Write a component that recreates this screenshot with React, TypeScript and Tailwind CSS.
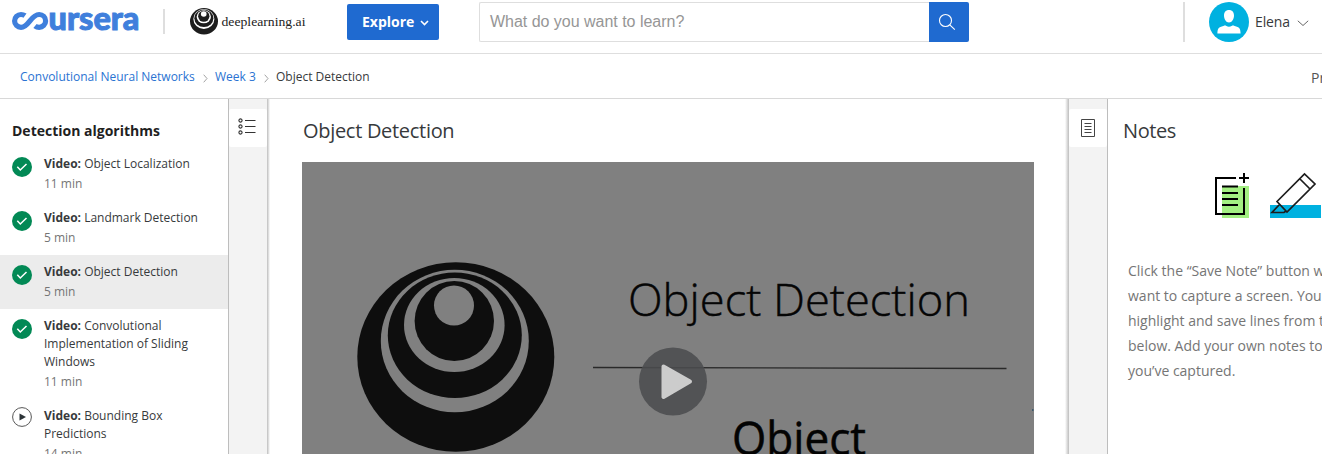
import React from "react";

const lessons = [
  { title: "Object Localization", time: "11 min", done: true, active: false },
  { title: "Landmark Detection", time: "5 min", done: true, active: false },
  { title: "Object Detection", time: "5 min", done: true, active: true },
  { title: "Convolutional Implementation of Sliding Windows", time: "11 min", done: true, active: false },
  { title: "Bounding Box Predictions", time: "14 min", done: false, active: false },
];

function CourseraLogo() {
  return (
    <svg width="130" height="22" viewBox="0 0 130 22" className="shrink-0 overflow-visible">
      <path d="M14 5.700C12.900 4.900 11.600 4.500 10 4.500a6.400 6.400 0 0 0 0 12.800C18 17.300 19.600 4.500 28.200 4.500a6.400 6.400 0 1 1 0 12.800c-1.700 0-3.100-.5-4.200-1.400" fill="none" stroke="#3f7fdc" strokeWidth="5.200" />
      <text x="37.500" y="19.500" textLength="91" lengthAdjust="spacingAndGlyphs" fill="#3f7fdc" stroke="#3f7fdc" strokeWidth="1" fontSize="32.500" className="font-[Lato] font-black">ursera</text>
    </svg>
  );
}

function Rings({ bg, ink }: { bg: string; ink: string }) {
  return (
    <>
      <ellipse cx="98.5" cy="95" rx="98.5" ry="94.7" fill={ink} />
      <ellipse cx="97.5" cy="79" rx="74" ry="71.3" fill={bg} />
      <ellipse cx="97.5" cy="73.300" rx="67" ry="62.700" fill={ink} />
      <ellipse cx="97" cy="63" rx="50.3" ry="47" fill={bg} />
      <ellipse cx="97" cy="59" rx="39.7" ry="40" fill={ink} />
      <circle cx="96.7" cy="43.5" r="20" fill={bg} />
    </>
  );
}

function Header() {
  return (
    <header className="flex h-[54px] shrink-0 border-b border-[#dedede]">
      <div className="mt-[10px] ml-[11px] h-[22px] w-[130px]"><CourseraLogo /></div>
      <div className="mt-[9px] ml-[22px] h-[25px] w-0.5 bg-[#dedede]" />
      <svg viewBox="0 0 197 190" preserveAspectRatio="none" className="mt-[8px] ml-[25px] h-[26.5px] w-[28px]">
        <Rings bg="#fff" ink="#1d1d1d" />
      </svg>
      <svg width="88" height="24" className="mt-[10px] ml-[2px]">
        <text x="1.500" y="16" textLength="84" lengthAdjust="spacingAndGlyphs" fontSize="12.500" fill="#222" className="font-['Liberation_Serif']">deeplearning.ai</text>
      </svg>
      <button className="mt-[4px] ml-[39px] flex h-[36px] w-[92px] items-center rounded-[2px] bg-[#1f6ad0] pb-[1px] pl-[15px] text-[14px] font-bold text-white">
        <span>Explore</span>
        <svg width="9" height="6" viewBox="0 0 9 6" className="mt-[2px] ml-[6px]"><path d="M1 1l3.5 3.5L8 1" fill="none" stroke="#fff" strokeWidth="1.6" /></svg>
      </button>
      <div className="mt-[2px] ml-[40px] flex h-[40px] w-[490px]">
        <div className="flex w-[450px] items-center rounded-l-[2px] border border-r-0 border-[#dedede] pb-[1px] pl-[10px] font-['Liberation_Sans'] text-[16px] text-[#969696]"><span className="tracking-[-0.02px]">What do you want to learn?</span></div>
        <div className="flex w-[40px] items-center justify-center rounded-r-[2px] bg-[#1f6ad0]">
          <svg width="18" height="18" viewBox="0 0 18 18" className="-ml-[5px]" fill="none" stroke="#fff" strokeWidth="1.1"><circle cx="7.5" cy="7.5" r="6" /><path d="M11.8 11.8l5 4.8" /></svg>
        </div>
      </div>
      <div className="mt-[2px] ml-[214px] h-[40px] w-0.5 bg-[#dedede]" />
      <svg width="40" height="40" viewBox="0 0 40 40" className="mt-[2px] ml-[24px] shrink-0">
        <circle cx="20" cy="20" r="20" fill="#00b1e0" />
        <path d="M20 8c3.2 0 5 2.2 5 5.4 0 3.4-2 7-5 7s-5-3.600-5-7C15 10.200 16.800 8 20 8ZM8.400 31.500c0-5 1.200-6.500 6-7.600 1.600-.4 2-.4 3 .2 1.600.9 3.600.9 5.200 0 1-.6 1.400-.6 3-.2 4.800 1.100 6 2.600 6 7.600Z" fill="#fff" />
      </svg>
      <div className="mt-[12px] ml-[6px] text-[14px] leading-5 tracking-[-0.1px] text-[#373a3c]">Elena</div>
      <svg width="12" height="7" viewBox="0 0 12 7" className="mt-[20px] ml-[7px]"><path d="M.8.8L6 5.500l5.200-4.700" fill="none" stroke="#666" strokeWidth="1" /></svg>
    </header>
  );
}

function Chevron() {
  return <svg width="5" height="9" viewBox="0 0 5 9" className="mt-[2px]"><path d="M.7.700l3.300 3.800-3.300 3.800" fill="none" stroke="#999" strokeWidth=".9" /></svg>;
}

function Breadcrumbs() {
  return (
    <nav className="flex h-[45px] shrink-0 items-center border-b border-[#d8d8d8] pt-[2px] pl-[20px] text-[12px]">
      <span className="w-[175px] whitespace-nowrap text-[#2a73d2]">Convolutional Neural Networks</span>
      <span className="w-[8px]" /><Chevron />
      <span className="ml-[7px] w-[41px] whitespace-nowrap text-[#2a73d2]">Week 3</span>
      <span className="w-[8px]" /><Chevron />
      <span className="ml-[7px] w-[94px] whitespace-nowrap text-[#373a3c]">Object Detection</span>
      <span className="ml-auto w-[11px] overflow-hidden whitespace-nowrap text-[14px] text-[#555]">Prev</span>
    </nav>
  );
}

function Sidebar() {
  return (
    <aside className="w-[229px] shrink-0 border-r border-[#bdbdbd]">
      <h3 className="mt-[22px] mb-[6px] pl-[12px] text-[14px] leading-5 font-bold text-[#1f1f1f]">Detection algorithms</h3>
      {lessons.map((l) => (
        <div key={l.title} className={l.active ? "flex bg-[#ececec] pt-[8px] pb-[6px] pl-[12px]" : "flex pt-[8px] pb-[6px] pl-[12px]"}>
          <svg width="20" height="20" viewBox="0 0 20 20" className={l.done ? "mt-[2px] shrink-0" : "shrink-0"}>
            {l.done ? (
              <><circle cx="10" cy="10" r="10" fill="#028955" /><path d="M5.300 9.800l3 3.200L14.500 7" fill="none" stroke="#fff" strokeWidth="1.500" /></>
            ) : (
              <><circle cx="10" cy="10" r="9.400" fill="#fff" stroke="#444" strokeWidth=".9" /><path d="M7.500 6.500L14 10l-6.500 3.500z" fill="#2d3438" /></>
            )}
          </svg>
          <div className="ml-[12px] w-[160px] text-[12px] leading-[18px] text-[#373a3c]">
            <div><b>Video:</b> {l.title}</div>
            <div className="mt-[2px] pb-[2px] text-[#757575]">{l.time}</div>
          </div>
        </div>
      ))}
    </aside>
  );
}

function Video() {
  return (
    <div className="mt-[17px] ml-[32px] h-[300px] w-[732px] overflow-hidden bg-[#808080]">
      <svg width="732" height="300" viewBox="302 162 732 300">
        <g transform="translate(357.300 262)"><Rings bg="#808080" ink="#0e0e0e" /></g>
        <text x="628" y="315.500" textLength="342" lengthAdjust="spacingAndGlyphs" fontSize="45" fill="#050505" stroke="#050505" strokeWidth=".45" className="font-['Open_Sans'] font-light">Object Detection</text>
        <path d="M593 367.500L1006.500 368.500" stroke="#292929" strokeWidth="1.300" />
        <text x="732" y="454.500" textLength="134" lengthAdjust="spacingAndGlyphs" fontSize="45" fill="#030303" stroke="#030303" strokeWidth=".5" className="font-['Open_Sans'] font-medium">Object</text>
        <circle cx="673" cy="381.500" r="34" fill="#4b4c4e" fillOpacity=".88" />
        <path d="M663.500 366.500L690 381.500L663.500 397Z" fill="#ccc" stroke="#ccc" strokeWidth="4" strokeLinejoin="round" />
        <path d="M1032 410h1.500" stroke="#244d68" strokeWidth="1.500" />
      </svg>
    </div>
  );
}

function NotesPanel() {
  return (
    <section className="w-[214px] shrink-0 overflow-hidden">
      <h2 className="mt-[18px] ml-[15px] text-[20px] leading-[28px] tracking-[-0.4px] text-[#373a3c]">Notes</h2>
      <svg width="110" height="47" viewBox="1212 171 110 47" className="mt-[26px] ml-[104px]">
        <path d="M1222 186h27v32h-27z" fill="#a3ef82" />
        <path d="M1236 178h-20v36h28v-26M1222 186.500h16M1222 193h16M1222 199h16M1222 205h16M1239 178h10M1244 173v10" fill="none" stroke="#000" strokeWidth="2" />
        <path d="M1270 205h51v13h-51z" fill="#00b1e0" />
        <path d="M1277 201.500l27.500-27.500 10.500 10-28 28zM1300 179l10.500 10.500M1279 205l-7 7.500h12l2-1.500" fill="none" stroke="#1d1d1d" strokeWidth="1.700" />
      </svg>
      <div className="mt-[40px] ml-[20px] text-[14px] leading-[25px] whitespace-nowrap text-[#757575]">
        <div>Click the “Save Note” button when you</div>
        <div>want to capture a screen. You can also</div>
        <div>highlight and save lines from the transcript</div>
        <div>below. Add your own notes to anything</div>
        <div>you’ve captured.</div>
      </div>
    </section>
  );
}

export default function App() {
  return (
    <div className="flex h-[454px] w-[1322px] flex-col overflow-hidden bg-white font-['Open_Sans',sans-serif]">
      <Header />
      <Breadcrumbs />
      <main className="flex min-h-0 flex-1 overflow-hidden">
        <Sidebar />
        <div className="w-[38px] shrink-0 bg-[#f3f3f3] pt-[10px]">
          <div className="flex h-[38px] items-center justify-center rounded-[2px] bg-white pb-[3px]">
            <svg width="18" height="18" viewBox="0 0 18 18" fill="none" stroke="#333" strokeWidth="1.100" className="-ml-[3px]">
              <circle cx="2.500" cy="2.500" r="1.600" /><circle cx="2.500" cy="8.500" r="1.600" /><circle cx="2.500" cy="14.500" r="1.600" /><path d="M7 2.500h10.500M7 8.500h10.500M7 14.500h10.500" />
            </svg>
          </div>
        </div>
        <div className="w-[3px] shrink-0 bg-linear-to-r from-[#bdbdbd] to-white" />
        <section className="w-[795px] shrink-0">
          <h1 className="mt-[18px] ml-[33px] text-[20px] leading-[28px] tracking-[-0.3px] text-[#373a3c]">Object Detection</h1>
          <Video />
        </section>
        <div className="w-[4px] shrink-0 bg-linear-to-l from-[#bdbdbd] to-white" />
        <div className="w-[39px] shrink-0 border-r border-[#bdbdbd] bg-[#f3f3f3] pt-[10px]">
          <div className="flex h-[38px] items-center justify-center rounded-[2px] bg-white">
            <svg width="14" height="18" viewBox="0 0 14 18" fill="none" stroke="#444" strokeWidth="1"><path d="M.500.500h13v17H.5zM3.500 4.500h7M3.500 7.500h7M3.500 10.500h7M3.500 13.500h7" /></svg>
          </div>
        </div>
        <NotesPanel />
      </main>
    </div>
  );
}
